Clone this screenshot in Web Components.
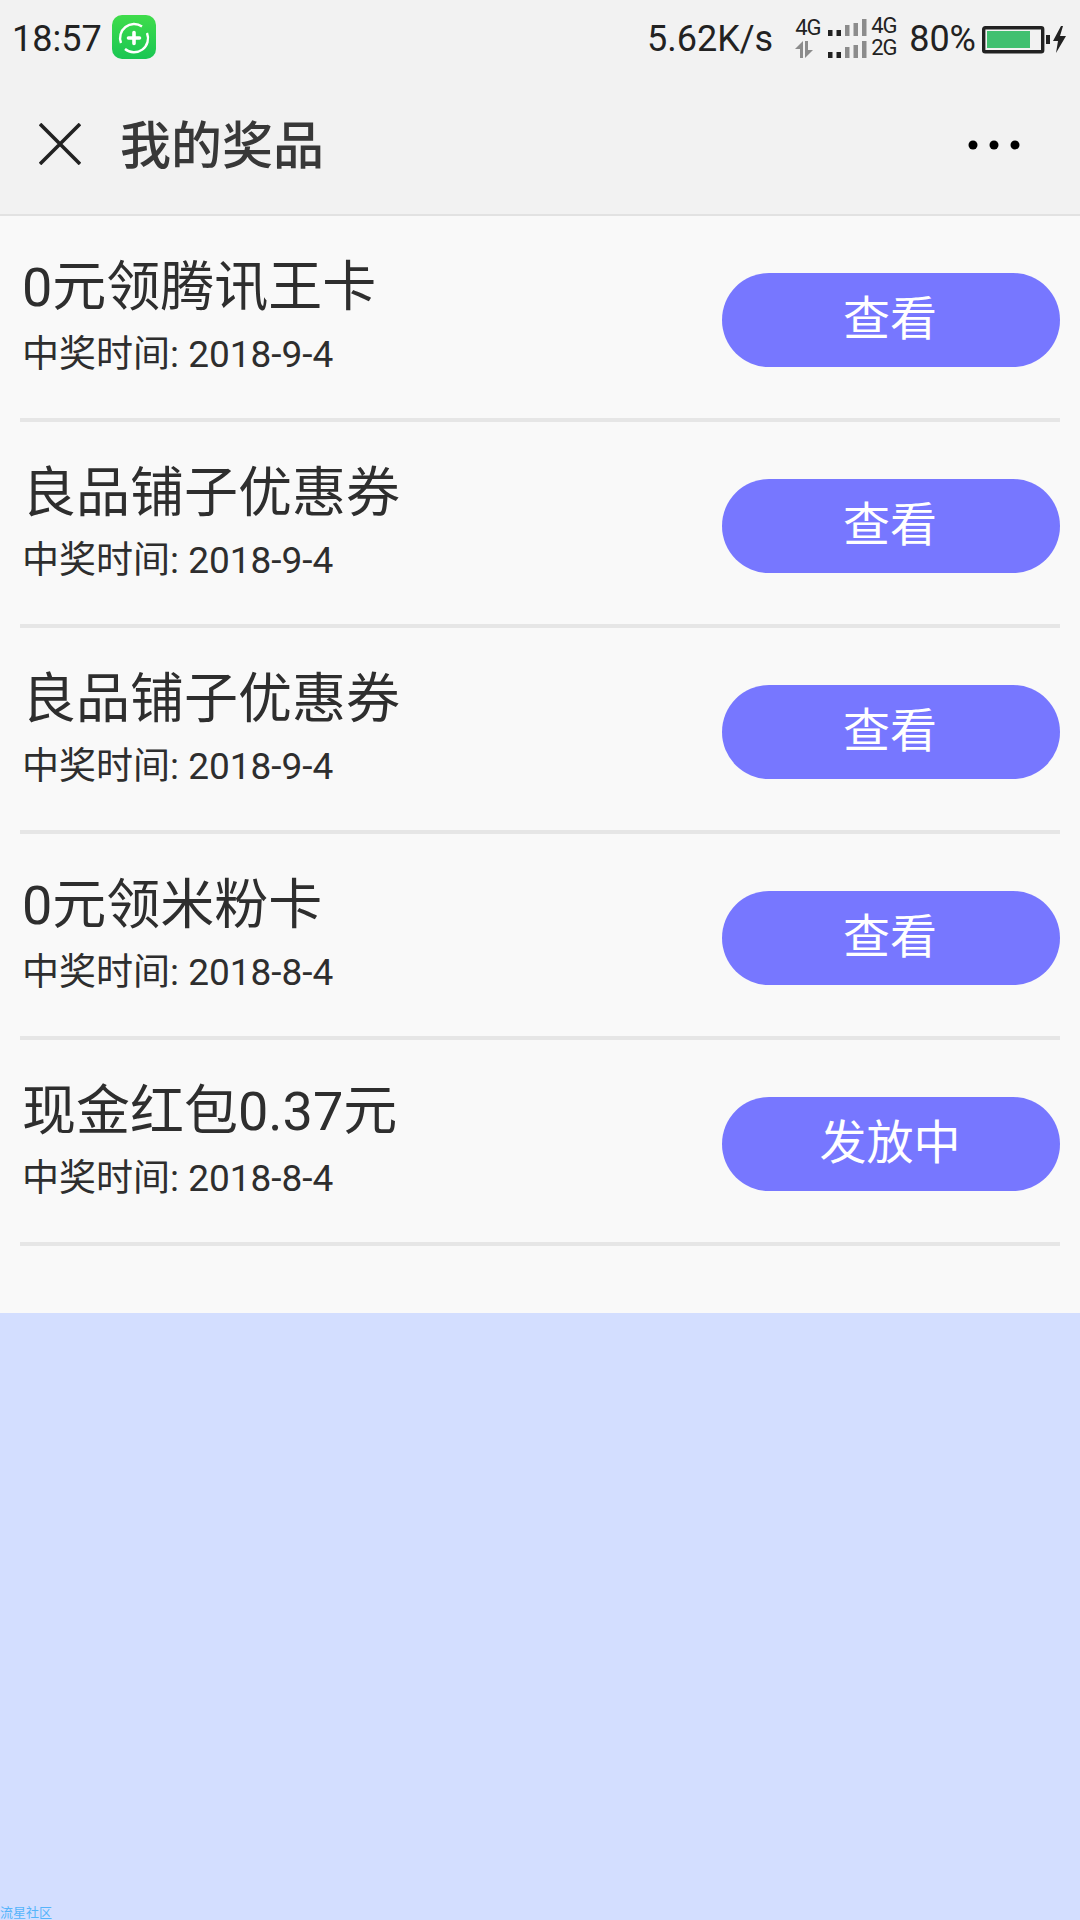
<!DOCTYPE html>
<html lang="zh">
<head>
<meta charset="utf-8">
<title>我的奖品</title>
<style>
  html, body { margin: 0; padding: 0; }
  body { background: #d3deff; font-family: Roboto, "Noto Sans CJK SC", sans-serif; }
</style>
</head>
<body>
<prize-app>
  <status-bar slot="status"></status-bar>
  <title-bar slot="title">我的奖品</title-bar>
  <prize-item name="0元领腾讯王卡" date="2018-9-4">查看</prize-item>
  <prize-item name="良品铺子优惠券" date="2018-9-4">查看</prize-item>
  <prize-item name="良品铺子优惠券" date="2018-9-4">查看</prize-item>
  <prize-item name="0元领米粉卡" date="2018-8-4">查看</prize-item>
  <prize-item name="现金红包0.37元" date="2018-8-4">发放中</prize-item>
</prize-app>

<script>
class PrizeApp extends HTMLElement {
  constructor() {
    super();
    this.attachShadow({ mode: 'open' }).innerHTML = `
      <style>
        :host {
          display: flex;
          flex-direction: column;
          height: 1920px;
          overflow: hidden;
          background: #d3deff;
          font-family: Roboto, "Noto Sans CJK SC", sans-serif;
        }
        .list {
          background: #f9f9f9;
          height: 1097px;
          padding: 0 20px;
          box-sizing: border-box;
        }
        .spacer { flex: 1; }
        .mark {
          font-size: 13px;
          line-height: 14px;
          height: 14px;
          color: #55b4fb;
        }
      </style>
      <slot name="status"></slot>
      <slot name="title"></slot>
      <div class="list"><slot></slot></div>
      <div class="spacer"></div>
      <div class="mark">流星社区</div>
    `;
  }
}

class StatusBar extends HTMLElement {
  constructor() {
    super();
    // signal bars, two sims, first two bars dark
    const bars = (y) => [[0, 6], [8.5, 6], [17, 11], [25.5, 13], [34, 17]].map(([x, h], i) =>
      `<rect x="${x}" y="${y - h}" width="4.5" height="${h}" fill="${i < 2 ? '#222' : '#8c8c8c'}"/>`).join('');
    this.attachShadow({ mode: 'open' }).innerHTML = `
      <style>
        :host {
          display: flex;
          align-items: center;
          height: 86px;
          padding: 0 13px 8px 12px;
          box-sizing: border-box;
          background: #f2f2f2;
          color: #222;
          font-size: 36px;
        }
        .app { margin: 0 0 4px 10px; display: block; }
        .speed { margin-left: auto; }
        .net {
          display: flex;
          flex-direction: column;
          font-size: 22px;
          line-height: 22px;
          letter-spacing: -1px;
          margin-top: -4px;
        }
        .net svg { display: block; margin-top: 2px; }
        .col-net { margin-left: 22px; width: 25px; }
        .signal { margin-left: 8px; margin-top: -2px; display: block; }
        .col-sim { margin-left: 4px; width: 25px; }
        .pct { margin-left: 13px; }
        .bat { margin-left: 6px; display: block; }
      </style>
      <span>18:57</span>
      <svg class="app" width="44" height="44" viewBox="0 0 44 44">
        <defs>
          <linearGradient id="g" x1="0" y1="0" x2="0" y2="1">
            <stop offset="0" stop-color="#3fdc4b"/>
            <stop offset="1" stop-color="#1ac653"/>
          </linearGradient>
        </defs>
        <rect width="44" height="44" rx="10" fill="url(#g)"/>
        <path d="M9 28A14 14 0 0 1 30 11.5M35 18A14 14 0 0 1 13 34" fill="none" stroke="#fff" stroke-width="2.4"/>
        <path d="M22 17.5v11M16.5 23h11" stroke="#fff" stroke-width="3.6" stroke-linecap="round"/>
      </svg>
      <span class="speed">5.62K/s</span>
      <div class="net col-net">
        <span>4G</span>
        <svg width="18" height="17" viewBox="0 0 18 17">
          <path d="M8 0v17H5V8H0zM10 0h3v9h5l-8 8z" fill="#8c8c8c"/>
        </svg>
      </div>
      <svg class="signal" width="39" height="39" viewBox="0 0 39 39">${bars(17)}${bars(39)}</svg>
      <div class="net col-sim"><span>4G</span><span>2G</span></div>
      <span class="pct">80%</span>
      <svg class="bat" width="85" height="29" viewBox="0 0 85 29">
        <rect x="1.7" y="2.7" width="59" height="24" rx="1.5" fill="none" stroke="#222" stroke-width="3.4"/>
        <rect x="5" y="6" width="43" height="17" fill="#40c070"/>
        <rect x="64" y="10" width="4" height="9" fill="#222"/>
        <path d="M79 1L71 16h5l-2 12 10-17h-6l3-10z" fill="#222"/>
      </svg>
    `;
  }
}

class TitleBar extends HTMLElement {
  constructor() {
    super();
    this.attachShadow({ mode: 'open' }).innerHTML = `
      <style>
        :host {
          display: flex;
          align-items: center;
          height: 130px;
          padding: 0 60px 12px 39px;
          box-sizing: border-box;
          background: #f2f2f2;
          border-bottom: 2px solid #e2e2e2;
          color: #383838;
          font-size: 51px;
          font-weight: 500;
        }
        svg { display: block; }
        .name { margin: 0 0 5px 39px; flex: 1; }
        .more { margin-top: 2px; }
      </style>
      <svg width="42" height="42" viewBox="0 0 42 42">
        <path d="M1 1L41 41M41 1L1 41" stroke="#222" stroke-width="3.6" fill="none"/>
      </svg>
      <div class="name"><slot></slot></div>
      <svg class="more" width="52" height="10" viewBox="0 0 52 10">
        <circle cx="5" cy="5" r="4.5"/><circle cx="26" cy="5" r="4.5"/><circle cx="47" cy="5" r="4.5"/>
      </svg>
    `;
  }
}

class PrizeItem extends HTMLElement {
  constructor() {
    super();
    this.attachShadow({ mode: 'open' }).innerHTML = `
      <style>
        :host {
          display: flex;
          justify-content: space-between;
          height: 206px;
          box-sizing: border-box;
          border-bottom: 4px solid #e6e6e6;
          color: #2e2e2e;
        }
        .info { padding-top: 36px; margin-left: 2px; }
        .name { font-size: 54px; line-height: 72px; }
        .date { font-size: 37px; line-height: 50px; margin-top: 6px; }
        .btn {
          margin-top: 57px;
          width: 338px;
          height: 94px;
          padding: 0 2px 12px 0;
          box-sizing: border-box;
          border-radius: 47px;
          background: #7777ff;
          color: #fff;
          font-size: 47px;
          display: flex;
          align-items: center;
          justify-content: center;
        }
      </style>
      <div class="info">
        <div class="name"></div>
        <div class="date"></div>
      </div>
      <div class="btn"><slot></slot></div>
    `;
  }

  connectedCallback() {
    const shadow = this.shadowRoot;
    shadow.querySelector('.name').textContent = this.getAttribute('name');
    shadow.querySelector('.date').textContent = '中奖时间: ' + this.getAttribute('date');
  }
}

customElements.define('prize-app', PrizeApp);
customElements.define('status-bar', StatusBar);
customElements.define('title-bar', TitleBar);
customElements.define('prize-item', PrizeItem);
</script>
</body>
</html>
